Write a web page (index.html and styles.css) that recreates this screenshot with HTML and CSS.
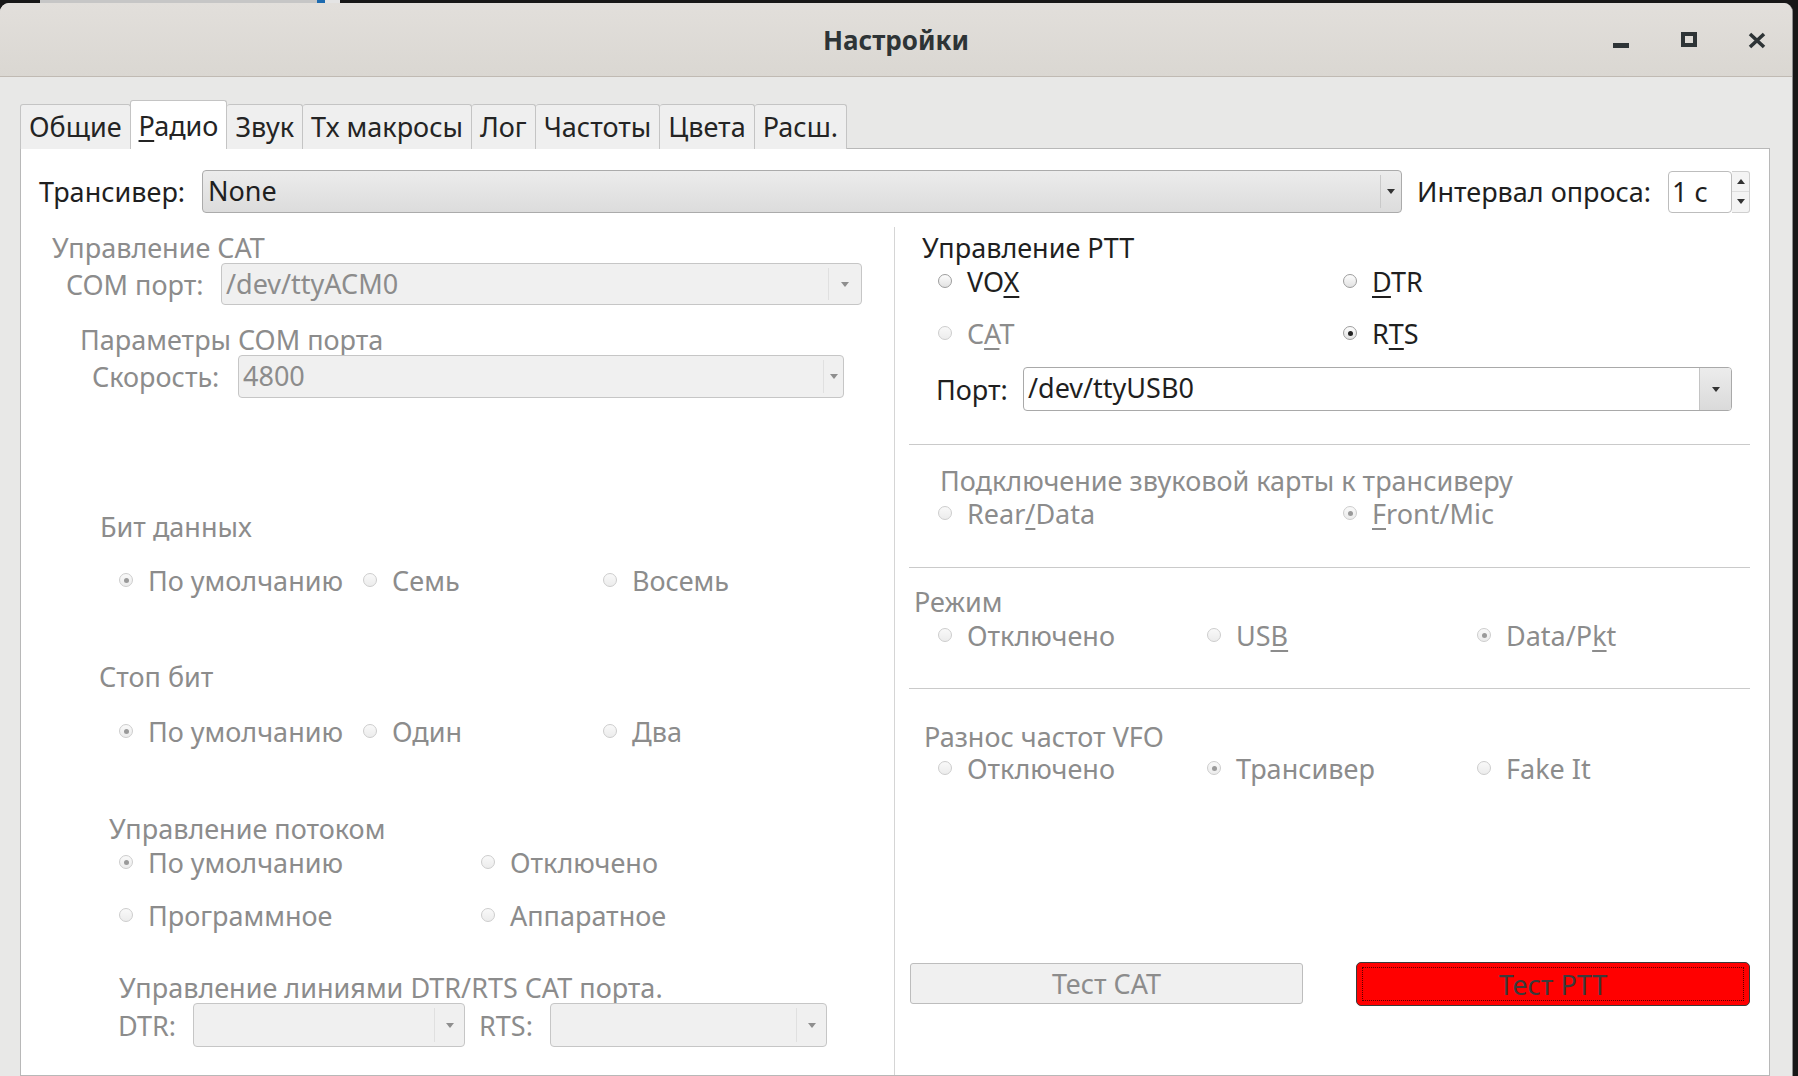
FILE: index.html
```html
<!DOCTYPE html>
<html lang="ru">
<head>
    <meta charset="UTF-8">
    <title>Настройки</title>
    <link rel="stylesheet" href="styles.css">
</head>
<body>
    <div class="desk">
        <span class="desk-bar"></span><span class="desk-blue"></span><span class="desk-icon"></span>
    </div>
    <div class="window">
        <div class="titlebar">
            <div class="title">Настройки</div>
            <div class="wm-buttons">
                <svg width="20" height="20" viewBox="0 0 20 20"><rect x="2" y="13" width="16" height="5" fill="#2e3436"/></svg>
                <svg width="20" height="20" viewBox="0 0 20 20"><rect x="4" y="4" width="12" height="11" fill="none" stroke="#2e3436" stroke-width="4"/></svg>
                <svg width="20" height="20" viewBox="0 0 20 20"><path d="M3 4 L17 17 M17 4 L3 17" stroke="#2e3436" stroke-width="3.6" fill="none"/></svg>
            </div>
        </div>

        <div class="content">
            <div class="tabs">
                <div class="tab first">Общие</div>
                <div class="tab active"><span class="mn">Р</span>адио</div>
                <div class="tab">Звук</div>
                <div class="tab">Тх макросы</div>
                <div class="tab">Лог</div>
                <div class="tab">Частоты</div>
                <div class="tab">Цвета</div>
                <div class="tab">Расш.</div>
            </div>

            <div class="pane">
                <div class="top-row">
                    <span class="flbl trx-lbl">Трансивер:</span>
                    <div class="combo raised trx-combo"><span class="val">None</span><span class="drop"></span></div>
                    <span class="flbl poll-lbl">Интервал опроса:</span>
                    <div class="spin">
                        <span class="spin-val">1 с</span>
                        <div class="spin-btns"><span class="up"></span><span class="down"></span></div>
                    </div>
                </div>

                <div class="columns">
                    <!-- left: CAT -->
                    <div class="col col-left off">
                        <div class="grp cat-title">Управление CAT</div>
                        <div class="frow com-row">
                            <span class="flbl com-lbl">COM порт:</span>
                            <div class="combo com-combo"><span class="val">/dev/ttyACM0</span><span class="drop"></span></div>
                        </div>

                        <div class="grp params-title">Параметры COM порта</div>
                        <div class="frow speed-row">
                            <span class="flbl speed-lbl">Скорость:</span>
                            <div class="combo speed-combo"><span class="val">4800</span><span class="drop"></span></div>
                        </div>

                        <div class="grp bits-title">Бит данных</div>
                        <div class="rrow three bits-row">
                            <label class="radio checked"><span class="rb"></span><span>По умолчанию</span></label>
                            <label class="radio"><span class="rb"></span><span>Семь</span></label>
                            <label class="radio"><span class="rb"></span><span>Восемь</span></label>
                        </div>

                        <div class="grp stop-title">Стоп бит</div>
                        <div class="rrow three stop-row">
                            <label class="radio checked"><span class="rb"></span><span>По умолчанию</span></label>
                            <label class="radio"><span class="rb"></span><span>Один</span></label>
                            <label class="radio"><span class="rb"></span><span>Два</span></label>
                        </div>

                        <div class="grp flow-title">Управление потоком</div>
                        <div class="rrow two flow-row1">
                            <label class="radio checked"><span class="rb"></span><span>По умолчанию</span></label>
                            <label class="radio"><span class="rb"></span><span>Отключено</span></label>
                        </div>
                        <div class="rrow two flow-row2">
                            <label class="radio"><span class="rb"></span><span>Программное</span></label>
                            <label class="radio"><span class="rb"></span><span>Аппаратное</span></label>
                        </div>

                        <div class="grp lines-title">Управление линиями DTR/RTS CAT порта.</div>
                        <div class="frow lines-row">
                            <span class="flbl dtr-lbl">DTR:</span>
                            <div class="combo dtr-combo"><span class="val"></span><span class="drop"></span></div>
                            <span class="flbl rts-lbl">RTS:</span>
                            <div class="combo rts-combo"><span class="val"></span><span class="drop"></span></div>
                        </div>
                    </div>

                    <!-- right: PTT etc -->
                    <div class="col col-right">
                        <div class="grp ptt-title">Управление PTT</div>
                        <div class="ptt-grid">
                            <label class="radio on"><span class="rb"></span><span>VO<span class="mn">X</span></span></label>
                            <label class="radio on"><span class="rb"></span><span><span class="mn">D</span>TR</span></label>
                            <label class="radio dis"><span class="rb"></span><span>C<span class="mn">A</span>T</span></label>
                            <label class="radio on checked"><span class="rb"></span><span>R<span class="mn">T</span>S</span></label>
                        </div>
                        <div class="frow port-row">
                            <span class="flbl port-lbl">Порт:</span>
                            <div class="combo edit port-combo"><span class="val">/dev/ttyUSB0</span><span class="drop"></span></div>
                        </div>

                        <div class="sep sep-ptt"></div>

                        <div class="off">
                            <div class="grp snd-title">Подключение звуковой карты к трансиверу</div>
                            <div class="rrow two-r snd-row">
                                <label class="radio"><span class="rb"></span><span>Rear<span class="mn">/</span>Data</span></label>
                                <label class="radio checked"><span class="rb"></span><span><span class="mn">F</span>ront/Mic</span></label>
                            </div>
                        </div>

                        <div class="sep sep-snd"></div>

                        <div class="off">
                            <div class="grp mode-title">Режим</div>
                            <div class="rrow three-r mode-row">
                                <label class="radio"><span class="rb"></span><span>Отключено</span></label>
                                <label class="radio"><span class="rb"></span><span>US<span class="mn">B</span></span></label>
                                <label class="radio checked"><span class="rb"></span><span>Data/P<span class="mn">k</span>t</span></label>
                            </div>
                        </div>

                        <div class="sep sep-mode"></div>

                        <div class="off">
                            <div class="grp vfo-title">Разнос частот VFO</div>
                            <div class="rrow three-r vfo-row">
                                <label class="radio"><span class="rb"></span><span>Отключено</span></label>
                                <label class="radio checked"><span class="rb"></span><span>Трансивер</span></label>
                                <label class="radio"><span class="rb"></span><span>Fake It</span></label>
                            </div>
                        </div>

                        <div class="test-row">
                            <button class="btn-cat" disabled>Тест CAT</button>
                            <button class="btn-ptt"><span class="focus">Тест PTT</span></button>
                        </div>
                    </div>
                </div>
            </div>
        </div>
    </div>
</body>
</html>
```

FILE: styles.css
```css
* { box-sizing: border-box; }
html, body { margin: 0; height: 100%; }
body { background: #171717; font-family: "Noto Sans", "Open Sans", sans-serif; font-size: 27px; color: #1f1f1f; overflow: hidden; }

/* desktop strip behind the window */
.desk { height: 3px; display: flex; }
.desk-bar { width: 277px; margin-left: 40px; background: #c6c6c6; }
.desk-blue { width: 8px; background: #1d6bb0; }
.desk-icon { width: 15px; background: #e4e4e4; }

.window { width: 1793px; height: 1073px; background: #e8e8e7; border-radius: 9px 9px 0 0; border-right: 1px solid #8c8c8c; overflow: hidden; display: flex; flex-direction: column; }

/* title bar */
.titlebar { height: 74px; flex: none; display: grid; grid-template-columns: 1fr auto 1fr; align-items: center; background: linear-gradient(#e2dfdb, #dad7d2); border-bottom: 1px solid #c0bab3; }
.title { grid-column: 2; font-size: 26px; font-weight: 700; color: #2e3436; }
.wm-buttons { grid-column: 3; justify-self: end; display: flex; gap: 48px; margin-right: 25px; margin-top: 1px; }
.wm-buttons svg { display: block; }

.content { flex: 1; display: flex; flex-direction: column; padding: 0 22px 0 20px; min-height: 0; }

/* tabs */
.tabs { display: flex; align-items: flex-end; margin-top: 23px; margin-bottom: -1px; position: relative; z-index: 1; }
.tab { height: 45px; padding: 2px 8px 0; line-height: 40px; background: #efefef; border: 1px solid #c4c4c4; border-left: none; border-bottom: none; border-radius: 3px 3px 0 0; color: #242424; white-space: nowrap; }
.tab.first { border-left: 1px solid #c4c4c4; }
.tab.active { height: 49px; padding-top: 5px; background: #fff; border-left: 1px solid #c4c4c4; margin-left: -1px; }
.mn { text-decoration: underline; text-decoration-thickness: 2px; text-underline-offset: 4px; }

.pane { flex: 1; background: #fff; border: 1px solid #b8b8b8; display: flex; flex-direction: column; min-height: 0; }

/* first row */
.top-row { display: flex; align-items: center; height: 43px; margin-top: 21px; padding: 0 19px 0 18px; flex: none; }
.flbl { white-space: nowrap; flex: none; }
.trx-lbl { width: 163px; }
.trx-combo { flex: 1; }
.poll-lbl { width: 251px; margin-left: 15px; }

/* combo boxes */
.combo { display: flex; align-self: stretch; border: 1px solid #c6c6c6; border-radius: 4px; background: #f0f0f0; color: #8c8c8c; }
.combo .val { flex: 1; padding-left: 4px; line-height: 40px; white-space: nowrap; overflow: hidden; }
.combo .drop { width: 33px; flex: none; margin: 4px 0; border-left: 1px solid #e0e0e0; display: flex; align-items: center; justify-content: center; }
.combo .drop::after { content: ""; border-left: 4px solid transparent; border-right: 4px solid transparent; border-top: 5px solid #8e8e8e; }
.combo.raised { background: linear-gradient(#ececec, #dcdcdc); border-color: #ababab; color: #1f1f1f; }
.combo.raised .val { padding-left: 5px; }
.combo.raised .drop { width: 21px; border-left-color: #c9c9c9; }
.combo.raised .drop::after { border-top-color: #333; }
.combo.edit { background: #fff; border-color: #a9a9a9; color: #1f1f1f; }
.combo.edit .drop { width: 32px; margin: 0; background: linear-gradient(#ececec, #dadada); border-left-color: #c4c4c4; border-radius: 0 3px 3px 0; }
.combo.edit .drop::after { border-top-color: #333; }

/* spin box */
.spin { width: 82px; height: 42px; display: flex; flex: none; }
.spin-val { width: 64px; border: 1px solid #bdbdbd; border-radius: 4px; background: #fff; line-height: 40px; padding-left: 3px; }
.spin-btns { flex: 1; display: flex; flex-direction: column; border: 1px solid #cfcfcf; border-left: none; border-radius: 0 3px 3px 0; background: #f4f4f4; }
.spin-btns span { flex: 1; display: flex; align-items: center; justify-content: center; }
.spin-btns .up { border-bottom: 1px solid #dedede; }
.spin-btns .up::after { content: ""; border-left: 4px solid transparent; border-right: 4px solid transparent; border-bottom: 5px solid #333; }
.spin-btns .down::after { content: ""; border-left: 4px solid transparent; border-right: 4px solid transparent; border-top: 5px solid #333; }

/* columns */
.columns { flex: 1; display: grid; grid-template-columns: 874px 874px; margin-top: 14px; min-height: 0; }
.col { display: flex; flex-direction: column; }
.col-left { border-right: 1px solid #d5d5d5; }
.off { color: #8c8c8c; }

.grp { line-height: 30px; white-space: nowrap; }
.frow { display: flex; align-items: center; flex: none; }

/* radios */
.rrow { display: grid; height: 36px; align-items: center; }
.radio { display: flex; align-items: center; gap: 15px; white-space: nowrap; height: 36px; }
.rb { width: 14px; height: 14px; flex: none; border-radius: 50%; border: 1px solid #cdcdcd; background: linear-gradient(#f9f9f9, #ececec); display: flex; align-items: center; justify-content: center; }
.radio.checked .rb::after { content: ""; width: 5px; height: 5px; border-radius: 50%; background: #9a9a9a; }
.radio.on .rb { border-color: #9d9d9d; background: linear-gradient(#fdfdfd, #e2e2e2); }
.radio.on.checked .rb::after { background: #222; }
.radio.dis { color: #8c8c8c; }

/* left column spacing */
.cat-title { margin-top: 6px; padding-left: 31px; }
.com-row { height: 42px; padding-left: 45px; }
.com-lbl { width: 155px; }
.com-combo { width: 641px; }
.params-title { margin-top: 20px; padding-left: 59px; }
.speed-row { height: 43px; padding-left: 71px; }
.speed-lbl { width: 146px; }
.speed-combo { width: 606px; }
.speed-combo .drop { width: 20px; }
.bits-title { margin-top: 114px; padding-left: 79px; }
.three { grid-template-columns: 244px 240px auto; padding-left: 98px; }
.two { grid-template-columns: 362px auto; padding-left: 98px; }
.bits-row { margin-top: 20px; }
.stop-title { margin-top: 64px; padding-left: 78px; }
.stop-row { margin-top: 21px; }
.flow-title { margin-top: 65px; padding-left: 88px; }
.flow-row1 { margin-top: 0; }
.flow-row2 { margin-top: 17px; }
.lines-title { margin-top: 40px; padding-left: 98px; }
.lines-row { height: 44px; padding-left: 97px; }
.dtr-lbl { width: 75px; }
.dtr-combo { width: 272px; }
.rts-lbl { width: 71px; margin-left: 14px; }
.rts-combo { width: 277px; }
.dtr-combo .drop, .rts-combo .drop { width: 30px; }

/* right column spacing */
.ptt-title { margin-top: 6px; padding-left: 27px; }
.ptt-grid { display: grid; grid-template-columns: 405px auto; row-gap: 16px; margin-top: 0; padding-left: 43px; }
.port-row { height: 44px; margin-top: 16px; padding-left: 41px; padding-right: 37px; }
.port-lbl { width: 87px; }
.port-combo { flex: 1; }
.sep { height: 1px; background: #cacaca; margin-left: 14px; margin-right: 19px; flex: none; }
.sep-ptt { margin-top: 33px; }
.snd-title { margin-top: 21px; padding-left: 45px; }
.two-r { grid-template-columns: 405px auto; padding-left: 43px; }
.snd-row { margin-top: -1px; }
.sep-snd { margin-top: 36px; }
.mode-title { margin-top: 19px; padding-left: 19px; }
.three-r { grid-template-columns: 269px 270px auto; padding-left: 43px; }
.mode-row { margin-top: 0; }
.sep-mode { margin-top: 35px; }
.vfo-title { margin-top: 33px; padding-left: 29px; }
.vfo-row { margin-top: -2px; }

/* test buttons */
.test-row { display: flex; align-items: flex-start; margin-top: 176px; padding-left: 15px; }
.test-row button { font-family: inherit; font-size: 27px; padding: 0; }
.btn-cat { width: 393px; height: 41px; margin-top: 1px; border: 1px solid #bdbdbd; border-radius: 3px; background: #f0f0f0; color: #8c8c8c; }
.btn-ptt { width: 394px; height: 44px; margin-left: 53px; border: 1px solid #3a3a3a; border-radius: 5px; background: #ff0000; color: #3a3a3a; display: flex; }
.btn-ptt .focus { flex: 1; margin: 4px 5px; border: 1px dotted #5a0000; display: flex; align-items: center; justify-content: center; }
```
